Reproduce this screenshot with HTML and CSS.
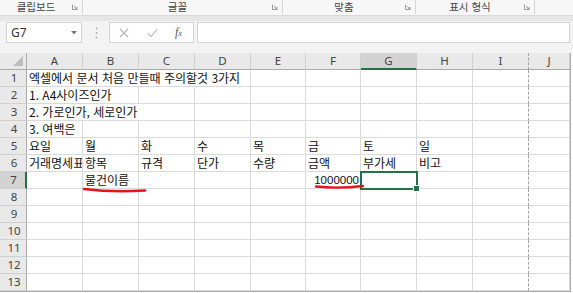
FILE: index.html
```html
<!DOCTYPE html>
<html lang="ko">
<head>
    <meta charset="UTF-8">
    <meta name="viewport" content="width=device-width, initial-scale=1.0">
    <title>Excel</title>
    <link rel="stylesheet" href="styles.css">
</head>
<body>
    <div class="ribbon">
        <div class="group g-clip"><span class="label">클립보드</span><svg class="launcher" width="6" height="6" viewBox="0 0 6 6"><path d="M0.5 0.5v5h5" fill="none" stroke="#999"/><path d="M2 2l3 3M5 3v2H3" fill="none" stroke="#999"/></svg></div>
        <div class="group g-font"><span class="label">글꼴</span><svg class="launcher" width="6" height="6" viewBox="0 0 6 6"><path d="M0.5 0.5v5h5" fill="none" stroke="#999"/><path d="M2 2l3 3M5 3v2H3" fill="none" stroke="#999"/></svg></div>
        <div class="group g-align"><span class="label">맞춤</span><svg class="launcher" width="6" height="6" viewBox="0 0 6 6"><path d="M0.5 0.5v5h5" fill="none" stroke="#999"/><path d="M2 2l3 3M5 3v2H3" fill="none" stroke="#999"/></svg></div>
        <div class="group g-num"><span class="label">표시 형식</span><svg class="launcher" width="6" height="6" viewBox="0 0 6 6"><path d="M0.5 0.5v5h5" fill="none" stroke="#999"/><path d="M2 2l3 3M5 3v2H3" fill="none" stroke="#999"/></svg></div>
    </div>
    <div class="strip"></div>

    <div class="formula-row">
        <div class="name-box">
            <span>G7</span>
            <svg width="6" height="4" viewBox="0 0 6 4"><path d="M0 0h6L3 3.5z" fill="#777"/></svg>
        </div>
        <svg class="grip" width="3" height="12" viewBox="0 0 3 12"><circle cx="1.5" cy="1.5" r="0.9" fill="#aaa"/><circle cx="1.5" cy="6" r="0.9" fill="#aaa"/><circle cx="1.5" cy="10.5" r="0.9" fill="#aaa"/></svg>
        <div class="fx-box">
            <svg width="10" height="10" viewBox="0 0 10 10"><path d="M1 1l8 8M9 1l-8 8" stroke="#b5b5b5" stroke-width="1.1"/></svg>
            <svg width="11" height="10" viewBox="0 0 11 10"><path d="M1 5.5l3 3 6-7" fill="none" stroke="#b5b5b5" stroke-width="1.1"/></svg>
            <span class="fx">f<small>x</small></span>
        </div>
        <div class="formula-input"></div>
    </div>

    <div class="sheet" id="sheet">
        <svg class="marks" width="570" height="240" viewBox="0 0 570 240">
            <path d="M84 136 Q112 139.5 145 137.5" fill="none" stroke="#e3141b" stroke-width="2.6" stroke-linecap="round"/>
            <path d="M316 133.5 Q338 136 363 133" fill="none" stroke="#e3141b" stroke-width="2.4" stroke-linecap="round"/>
        </svg>
    </div>

    <script>
        const cols = ['A', 'B', 'C', 'D', 'E', 'F', 'G', 'H', 'I', 'J'];
        const data = {
            1: { A: { text: '엑셀에서 문서 처음 만들때 주의할것 3가지', span: 4 } },
            2: { A: { text: '1. A4사이즈인가', span: 2 } },
            3: { A: { text: '2. 가로인가, 세로인가', span: 3 } },
            4: { A: '3. 여백은' },
            5: { A: '요일', B: '월', C: '화', D: '수', E: '목', F: '금', G: '토', H: '일' },
            6: { A: '거래명세표', B: '항목', C: '규격', D: '단가', E: '수량', F: '금액', G: '부가세', H: '비고' },
            7: { B: '물건이름', F: { text: '1000000', num: true } }
        };
        const active = { col: 'G', row: 7 };

        function makeCell(cls, text) {
            const el = document.createElement('div');
            el.className = cls;
            if (text) el.textContent = text;
            return el;
        }

        function buildSheet() {
            const sheet = document.getElementById('sheet');
            sheet.appendChild(makeCell('corner'));
            cols.forEach(c => {
                const cls = 'col-head' + (c === active.col ? ' sel' : '') + (c === 'I' ? ' page-break' : '');
                sheet.appendChild(makeCell(cls, c));
            });
            for (let r = 1; r <= 13; r++) {
                sheet.appendChild(makeCell('row-head' + (r === active.row ? ' sel' : ''), String(r)));
                const row = data[r] || {};
                for (let i = 0; i < cols.length; i++) {
                    const c = cols[i];
                    let val = row[c];
                    if (typeof val === 'string') val = { text: val };
                    val = val || {};
                    const span = val.span || 1;
                    let cls = 'cell';
                    if (val.num) cls += ' num';
                    if (cols[i + span - 1] === 'I') cls += ' page-break';
                    if (c === active.col && r === active.row) cls += ' active';
                    const el = makeCell(cls, val.text);
                    if (span > 1) el.style.gridColumn = 'span ' + span;
                    sheet.appendChild(el);
                    i += span - 1;
                }
            }
        }

        buildSheet();
    </script>
</body>
</html>
```
FILE: styles.css
```css
body {
    margin: 0;
    width: 573px;
    height: 293px;
    overflow: hidden;
    background-color: #ffffff;
    font-family: "Noto Sans CJK KR", "Noto Sans", sans-serif;
    color: #222222;
}
.ribbon {
    display: flex;
    height: 15px;
    background-color: #f7f7f7;
    font-size: 10.5px;
    color: #444444;
}
.group {
    display: flex;
    align-items: center;
    height: 14px;
    border-right: 1px solid #d6d6d6;
    box-sizing: border-box;
}
.g-clip { width: 83px; }
.g-font { width: 200px; }
.g-align { width: 133px; }
.g-num { width: 119px; }
.group .label {
    flex: 1;
    text-align: center;
    line-height: 14px;
}
.launcher {
    margin-right: 4px;
}
.strip {
    height: 6px;
    background-color: #e6e6e6;
    border-top: 1px solid #d8d8d8;
    box-sizing: border-box;
}
.formula-row {
    display: flex;
    align-items: center;
    height: 32px;
    padding: 0 3px 9px 6px;
    box-sizing: border-box;
    background-color: #f3f3f3;
}
.name-box,
.fx-box,
.formula-input {
    height: 21px;
    box-sizing: border-box;
    background-color: #ffffff;
    border: 1px solid #d2d2d2;
}
.name-box {
    display: flex;
    align-items: center;
    justify-content: space-between;
    width: 76px;
    padding: 0 4px 0 4px;
    font-family: "Noto Sans", sans-serif;
    font-size: 12px;
    color: #333333;
}
.grip {
    margin: 0 11px 0 13px;
}
.fx-box {
    display: flex;
    align-items: center;
    width: 85px;
    padding-left: 9px;
    gap: 18px;
}
.fx {
    font-family: "Liberation Serif", serif;
    font-style: italic;
    font-size: 12px;
    color: #555555;
    margin-left: -1px;
}
.fx small {
    font-size: 8px;
}
.formula-input {
    flex: 1;
    margin-left: 3px;
}
.sheet {
    position: relative;
    display: grid;
    grid-template-columns: 27px 56px 56px 56px 56px 55px 55px 56px 56px 56px 41px;
    grid-auto-rows: 17px;
    width: 570px;
    border-bottom: 1px solid #ababab;
    border-right: 1px solid #ababab;
}
.corner,
.col-head,
.row-head {
    background-color: #e9e9e9;
    color: #444444;
    font-family: "Noto Sans", sans-serif;
    font-size: 11.5px;
    text-align: center;
    line-height: 16px;
    box-sizing: border-box;
}
.corner {
    position: relative;
    border-right: 1px solid #ababab;
    border-bottom: 1px solid #ababab;
}
.corner::after {
    content: "";
    position: absolute;
    right: 3px;
    bottom: 3px;
    border-left: 10px solid transparent;
    border-bottom: 10px solid #bdbdbd;
}
.col-head {
    border-right: 1px solid #d0d0d0;
    border-bottom: 1px solid #ababab;
}
.row-head {
    border-right: 1px solid #ababab;
    border-bottom: 1px solid #d0d0d0;
    padding-left: 2px;
}
.col-head.sel {
    background-color: #d3d3d3;
    border-bottom: 2px solid #217346;
}
.row-head.sel {
    background-color: #d3d3d3;
    border-right: 2px solid #217346;
}
.cell {
    font-size: 12px;
    line-height: 16px;
    padding: 0 2px;
    white-space: nowrap;
    overflow: hidden;
    border-right: 1px solid #dadada;
    border-bottom: 1px solid #dadada;
    box-sizing: border-box;
    color: #111111;
}
.cell.num {
    text-align: right;
    padding-right: 1px;
    font-family: "Liberation Sans", sans-serif;
    font-size: 11.5px;
}
.page-break {
    border-right: 1px dashed #a0a0a0;
}
.cell.active {
    position: relative;
    overflow: visible;
    outline: 2px solid #217346;
    outline-offset: -1px;
    z-index: 1;
}
.cell.active::after {
    content: "";
    position: absolute;
    right: -4px;
    bottom: -4px;
    width: 5px;
    height: 5px;
    background-color: #217346;
    border: 1px solid #ffffff;
}
.marks {
    position: absolute;
    top: 0;
    left: 0;
    z-index: 2;
    pointer-events: none;
}
```
